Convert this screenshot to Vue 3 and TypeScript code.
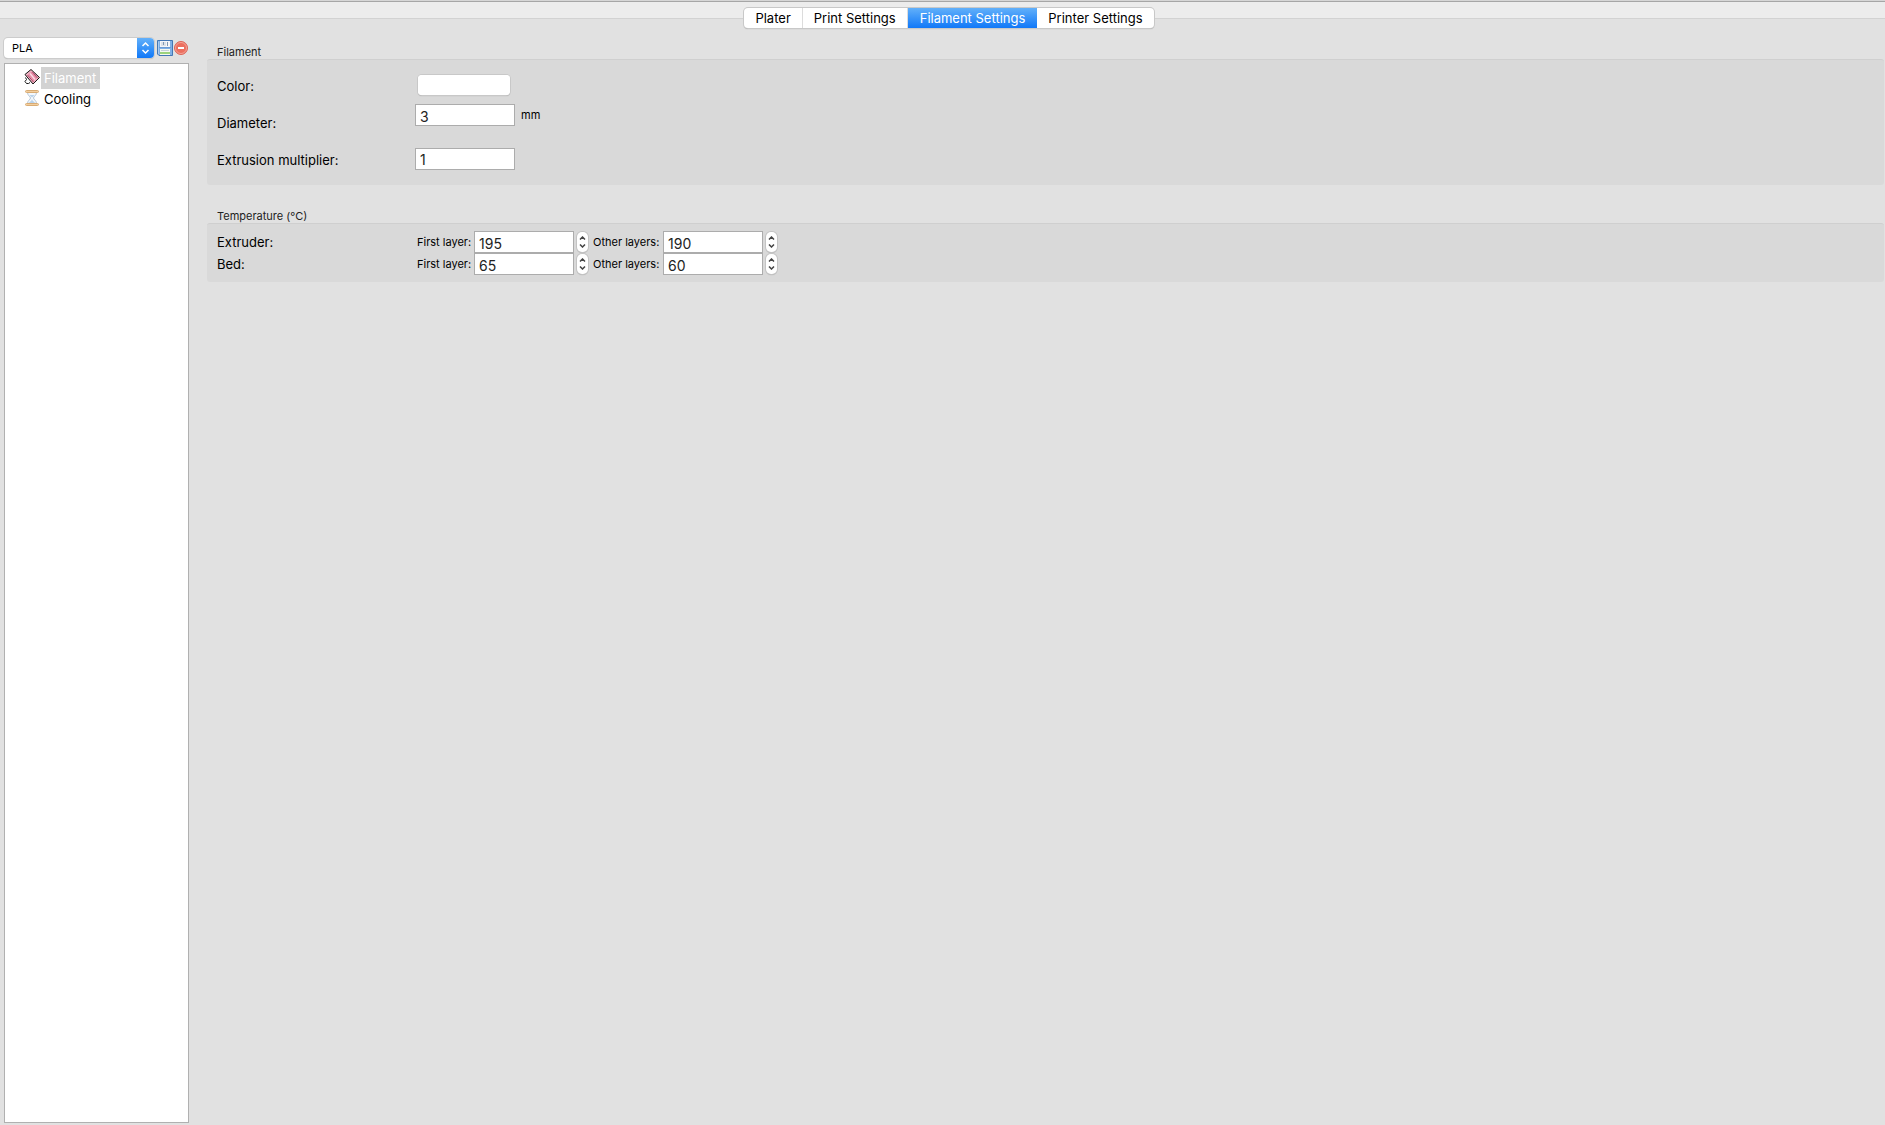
<script setup lang="ts">
import { reactive, ref } from 'vue'

const tabs = ['Plater', 'Print Settings', 'Filament Settings', 'Printer Settings']
const activeTab = ref('Filament Settings')
const activePage = ref('Filament')
const preset = ref('PLA')

const filament = reactive({ color: '#ffffff', diameter: '3', multiplier: '1' })

interface Temperature {
  id: string
  label: string
  value: number
}
const temperatures = reactive<{ name: string; fields: Temperature[] }[]>([
  {
    name: 'Extruder:',
    fields: [
      { id: 'extruder-first', label: 'First layer:', value: 195 },
      { id: 'extruder-other', label: 'Other layers:', value: 190 },
    ],
  },
  {
    name: 'Bed:',
    fields: [
      { id: 'bed-first', label: 'First layer:', value: 65 },
      { id: 'bed-other', label: 'Other layers:', value: 60 },
    ],
  },
])
</script>

<template>
  <div class="app">
    <header class="tabbar">
      <nav class="tabs">
        <button
          v-for="tab in tabs"
          :key="tab"
          type="button"
          class="tab"
          :class="{ active: tab === activeTab }"
          @click="activeTab = tab"
        >{{ tab }}</button>
      </nav>
    </header>

    <div class="body">
      <aside class="sidebar">
        <div class="preset">
          <div class="combo">
            <select v-model="preset" aria-label="Preset">
              <option>PLA</option>
            </select>
            <svg class="combo-arrows" viewBox="0 0 16 20" aria-hidden="true">
              <path d="M5 8l3-3 3 3M5 12l3 3 3-3" />
            </svg>
          </div>
          <button type="button" class="icon-button save" aria-label="Save preset">
            <svg viewBox="0 0 16 16" width="16" height="16">
              <path d="M.5.5h15v15H2L.5 14z" fill="#7fb0e6" stroke="#4377b4" />
              <path d="M1.5 1.5v12.5" stroke="#a9cbf0" />
              <path d="M3 1h10v6H3z" fill="#f3f6f9" />
              <path d="M4 2h5v4H4z" fill="#dce2e8" />
              <path d="M6 2h1v3H6zM10 2h1v4h-1z" fill="#7f99b4" />
              <path d="M2 7h12v1H2z" fill="#6a9dd6" />
              <path d="M3 9h10v6H3z" fill="#f4f8ef" />
              <path d="M4 10h8v1H4z" fill="#c5d2da" />
              <path d="M3 12h10v2H3z" fill="#9bd27c" />
            </svg>
          </button>
          <button type="button" class="icon-button" aria-label="Delete preset">
            <svg viewBox="0 0 14 14" width="14" height="14">
              <circle cx="7" cy="7" r="6.5" fill="#ec6f5f" stroke="#dc6558" />
              <circle cx="7" cy="7" r="5.5" fill="none" stroke="#f3a196" />
              <path d="M4 6h6v2H4z" fill="#fff" />
            </svg>
          </button>
        </div>

        <ul class="tree">
          <li>
            <button type="button" :class="{ selected: activePage === 'Filament' }" @click="activePage = 'Filament'">
              <svg viewBox="0 0 16 16" width="16" height="16" aria-hidden="true">
                <path d="M1 5.500L7 .5l8.500 8L9 15z" fill="#efb3c3" stroke="#161616" />
                <path d="M4 5.500l4-3 5 6.500-3.500 3z" fill="#e88aa6" />
                <path d="M6 4.500l5 6" stroke="#fadbe4" stroke-width="1.5" />
                <path d="M3.500 6l6 7M8.500 3l5 6" stroke="#a84666" />
                <path d="M1.500 8.500l1 2-1.500 2 1.500 2h2l1.500-1" fill="none" stroke="#161616" />
              </svg>
              <span>Filament</span>
            </button>
          </li>
          <li>
            <button type="button" :class="{ selected: activePage === 'Cooling' }" @click="activePage = 'Cooling'">
              <svg viewBox="0 0 16 16" width="16" height="16" aria-hidden="true">
                <path d="M3.500 2.500c0 3 3 4 3 5.500s-3 2.500-3 5.500h9c0-3-3-4-3-5.500s3-2.500 3-5.500z" fill="#f4f8fc" stroke="#b2c5d8" />
                <path d="M5.500 5h5L8 7.500zM5 13c1-2 2.500-1.500 3-4 .5 2.500 2 2 3 4z" fill="#b9d2ea" />
                <rect x="1.500" y=".5" width="13" height="2" rx="1" fill="#f3cf9f" stroke="#d9ac74" />
                <rect x="1.500" y="13.500" width="13" height="2" rx="1" fill="#f3cf9f" stroke="#d9ac74" />
              </svg>
              <span>Cooling</span>
            </button>
          </li>
        </ul>
      </aside>

      <main class="content">
        <section>
          <h2>Filament</h2>
          <div class="panel filament">
            <div class="row">
              <label for="color">Color:</label>
              <input id="color" v-model="filament.color" type="color" class="swatch" />
            </div>
            <div class="row top">
              <label for="diameter">Diameter:</label>
              <input id="diameter" v-model="filament.diameter" type="text" class="field" />
              <span class="unit">mm</span>
            </div>
            <div class="row">
              <label for="multiplier">Extrusion multiplier:</label>
              <input id="multiplier" v-model="filament.multiplier" type="text" class="field" />
            </div>
          </div>
        </section>

        <section>
          <h2>Temperature (°C)</h2>
          <div class="panel temperature">
            <div v-for="group in temperatures" :key="group.name" class="temp-row">
              <span class="name">{{ group.name }}</span>
              <div v-for="item in group.fields" :key="item.id" class="temp">
                <label :for="item.id">{{ item.label }}</label>
                <input :id="item.id" v-model="item.value" type="text" class="field" />
                <span class="spinner">
                  <button type="button" aria-label="Increase" @click="item.value++">
                    <svg viewBox="0 0 7 4" width="7" height="4"><path d="M1 3.500l2.500-2.500 2.500 2.500" /></svg>
                  </button>
                  <button type="button" aria-label="Decrease" @click="item.value--">
                    <svg viewBox="0 0 7 4" width="7" height="4"><path d="M1 .5L3.500 3 6 .5" /></svg>
                  </button>
                </span>
              </div>
            </div>
          </div>
        </section>
      </main>
    </div>
  </div>
</template>

<style>
body {
  margin: 0;
  background: #e1e1e1;
}
</style>

<style scoped>
* {
  box-sizing: border-box;
}

.app {
  display: flex;
  flex-direction: column;
  min-height: 100vh;
  background: #e1e1e1;
  color: #000;
  font: 13px/16px Inter, 'Liberation Sans', sans-serif;
}

button,
input,
select {
  margin: 0;
  padding: 0;
  border: 0;
  background: none;
  color: inherit;
  font: inherit;
}

svg {
  display: block;
  flex: none;
}

/* Tab strip: the divider line runs behind the segmented control */
.tabbar {
  display: flex;
  justify-content: center;
  padding: 8px 0 10px 13px;
  background: linear-gradient(#d6d6d6 1px, #a6a6a6 1px 2px, #ececec 2px 18px, #d2d2d2 18px 19px, #e1e1e1 19px);
}

.tabs {
  display: flex;
  height: 20px;
  border-radius: 4px;
  background: #fff;
  box-shadow: 0 0 0 1px #c8c8c8, 0 1px 1px #a0a0a0;
}

.tab {
  padding: 0 11px;
  line-height: 21px;
  border-right: 1px solid #dcdcdc;
  white-space: nowrap;
}

.tab:last-child {
  border-right: 0;
}

.tab.active {
  padding: 0 12px;
  background: linear-gradient(#62b0fa, #1078f8);
  color: #fff;
  border: 0;
}

.body {
  display: flex;
  flex: 1;
}

.sidebar {
  display: flex;
  flex-direction: column;
  flex: none;
  width: 189px;
  padding: 0 0 2px 4px;
}

.preset {
  display: flex;
  align-items: center;
  height: 20px;
  margin-bottom: 5px;
}

.combo {
  position: relative;
  width: 150px;
  height: 20px;
  border-radius: 4px;
  background: #fff;
  box-shadow: 0 0 0 1px #cccccc, 0 1px 1px #a8a8a8;
}

.combo select {
  width: 100%;
  height: 20px;
  padding: 0 20px 0 8px;
  appearance: none;
  font-size: 11px;
}

.combo-arrows {
  position: absolute;
  top: 0;
  right: 0;
  width: 17px;
  height: 20px;
  border-radius: 0 4px 4px 0;
  background: linear-gradient(#62b0fa, #1078f8);
  fill: none;
  stroke: #fff;
  stroke-width: 1.5;
  pointer-events: none;
}

.save {
  margin-left: 3px;
  margin-right: 1px;
}

.tree {
  flex: 1;
  margin: 0;
  padding: 3px 0 0 19px;
  border: 1px solid #b0b0b0;
  background: #fff;
  list-style: none;
}

.tree button {
  display: flex;
  align-items: flex-start;
  gap: 1px;
  height: 21px;
}

.tree svg {
  margin-top: 2px;
}

.tree span {
  padding: 0 4px 0 3px;
  line-height: 22px;
}

.tree .selected span {
  background: #d2d2d2;
  color: #fff;
}

.content {
  flex: 1;
  min-width: 0;
  padding: 6px 1px 0 18px;
}

section {
  margin-bottom: 23px;
}

h2 {
  margin: 0 0 0 10px;
  padding-top: 1px;
  font-size: 11px;
  font-weight: 400;
  line-height: 14px;
  color: #222;
}

.panel {
  padding: 7px 10px;
  border-top: 1px solid #cfcfcf;
  border-radius: 3px;
  background: #d9d9d9;
}

.row {
  display: flex;
  align-items: center;
  height: 37px;
}

.row.top {
  align-items: flex-start;
}

.row label {
  width: 198px;
}

.row.top label {
  line-height: 39px;
}

.field {
  width: 100px;
  height: 22px;
  padding: 2px 4px 0;
  border: 1px solid #acacac;
  background: #fff;
  color: #222;
  font-size: 14px;
}

.row > .field {
  margin-bottom: 2px;
}

.swatch {
  width: 92px;
  height: 20px;
  margin: 0 0 2px 3px;
  appearance: none;
  border-radius: 4px;
  overflow: hidden;
  background: #fff;
  box-shadow: 0 0 0 1px #c8c8c8, 0 1px 1px #a0a0a0;
}

.swatch::-webkit-color-swatch-wrapper {
  padding: 0;
}

.swatch::-webkit-color-swatch {
  border: 0;
}

.unit {
  margin-left: 6px;
  font-size: 11px;
  line-height: 22px;
}

.temp-row,
.temp {
  display: flex;
  align-items: center;
  height: 22px;
}

.name {
  width: 200px;
}

.temp label {
  width: 57px;
  font-size: 11px;
  white-space: nowrap;
}

.temp + .temp label {
  width: 70px;
}

.spinner {
  display: flex;
  flex-direction: column;
  justify-content: space-between;
  width: 11px;
  height: 20px;
  margin: 0 5px 0 3px;
  padding: 4px 2px;
  border-radius: 5px;
  background: #fff;
  box-shadow: 0 0 0 1px #c4c4c4, 0 1px 1px #a0a0a0;
}

.spinner svg {
  fill: none;
  stroke: #444;
  stroke-width: 1.5;
}
</style>
